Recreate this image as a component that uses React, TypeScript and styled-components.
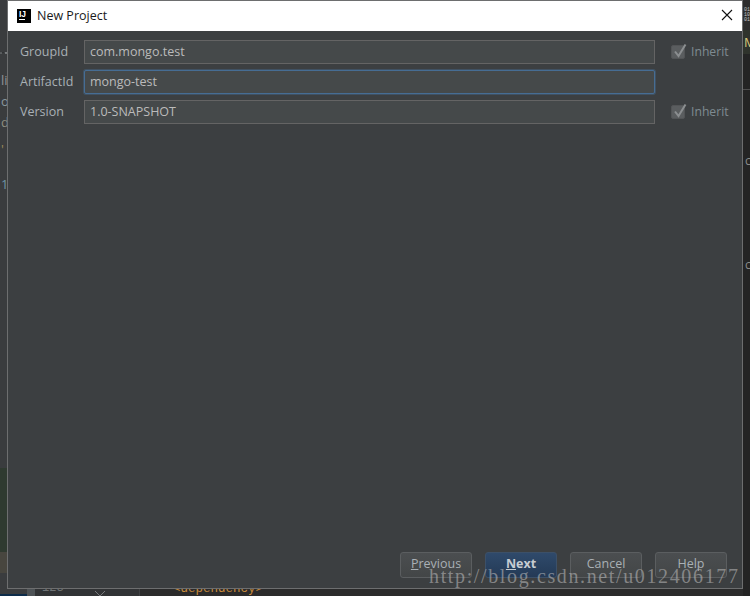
import React from "react";
import styled, { createGlobalStyle } from "styled-components";

const colors = {
  dialog: "#3c3f41",
  frame: "#6d6e6f",
  text: "#bbbbbb",
  label: "#a9b0b5",
  fieldBg: "#45494a",
  fieldBorder: "#646464",
  focus: "#466d94",
  muted: "#7f8b91",
  ide: "#2b2b2b",
};

const GlobalStyle = createGlobalStyle`
  html, body {
    margin: 0;
    padding: 0;
    background: ${colors.ide};
  }
`;

const Stage = styled.div`
  position: relative;
  width: 750px;
  height: 596px;
  overflow: hidden;
  display: flex;
  justify-content: space-between;
  background: ${colors.ide};
  font-family: "Open Sans", "Noto Sans", sans-serif;
`;

/* IDE window visible behind the dialog */
const LeftDock = styled.div`
  width: 27px;
  display: flex;
  flex-direction: column;
  background: #3a3c3e;
  flex-shrink: 0;
`;

const DockHead = styled.div`
  height: 53px;
  padding-top: 39px;
  border-bottom: 1px solid #2f3133;
  box-sizing: border-box;
`;

const TreeLines = styled.div`
  height: 415px;
  padding-top: 17px;
  box-sizing: border-box;
  display: flex;
  flex-direction: column;
  font: 13px/21px "Open Sans", sans-serif;
  color: #8f9396;
`;

const TreeLine = styled.div<{ $tone?: string; $gap?: number }>`
  height: 21px;
  padding-left: 1px;
  margin-top: ${(p) => p.$gap || 0}px;
  color: ${(p) => p.$tone || "#8f9396"};
`;

const GreenBlock = styled.div`
  height: 84px;
  background: #2f3a30;
`;

const TanBlock = styled.div`
  height: 21px;
  background: #48463f;
`;

const DockEnd = styled.div`
  flex: 1;
  display: flex;
  flex-direction: column;
  justify-content: flex-end;
`;

const BlueStrip = styled.div`
  height: 2px;
  background: #0d2c4a;
`;

const Editor = styled.div`
  flex: 1;
  display: flex;
  align-items: flex-end;
  height: 596px;
`;

const Gutter = styled.div`
  width: 113px;
  height: 16px;
  display: flex;
  align-items: center;
  box-sizing: border-box;
  background: #313335;
  border-right: 1px solid #3f4143;
  color: #6f7375;
  font: 12px "Liberation Mono", monospace;
`;

const GutterStripe = styled.div`
  width: 8px;
  align-self: stretch;
  margin-right: 7px;
  background: #4e5356;
`;

const FoldMark = styled.svg`
  margin-left: 30px;
  margin-top: 14px;
`;

const CodeLine = styled.div`
  height: 20px;
  padding-left: 33px;
  color: #c88a3a;
  font: 12.5px/26px "Liberation Mono", monospace;
`;

const RightDock = styled.div`
  width: 7px;
  background: #242424;
  flex-shrink: 0;
  display: flex;
  flex-direction: column;
  overflow: hidden;
`;

const BitsIcon = styled.div`
  height: 30px;
  padding-top: 8px;
  box-sizing: border-box;
  background: #2d2d2d;
  color: #c5c5c5;
  font: 5px/5px "Liberation Mono", monospace;
  padding-left: 1px;
`;

const TabRow = styled.div`
  height: 24px;
  background: #2f332c;
  color: #d8c87a;
  font: 13px/24px "Open Sans", sans-serif;
  padding-left: 1px;
  white-space: nowrap;
`;

const TabRule = styled.div`
  height: 36px;
  border-bottom: 1px solid #505050;
  box-sizing: border-box;
`;

const Marker = styled.div<{ $gap: number }>`
  margin-top: ${(p) => p.$gap}px;
  color: #8a8a8a;
  font: 12px/12px "Open Sans", sans-serif;
  padding-left: 2px;
`;

/* The dialog window */
const Dialog = styled.div`
  position: absolute;
  left: 7px;
  top: 0;
  width: 736px;
  height: 589px;
  box-sizing: border-box;
  border: 1px solid ${colors.frame};
  display: flex;
  flex-direction: column;
  background: ${colors.dialog};
`;

const TitleBar = styled.div`
  height: 30px;
  flex-shrink: 0;
  background: #ffffff;
  display: flex;
  align-items: center;
  padding: 0 9px 0 9px;
  gap: 6px;
`;

const AppLogo = styled.div`
  width: 14px;
  height: 14px;
  margin-bottom: 1px;
  background: #000;
  color: #fff;
  display: flex;
  flex-direction: column;
  align-items: flex-start;
  padding: 1px 2px;
  box-sizing: border-box;
  font: bold 8.5px/8px "Liberation Sans", sans-serif;
`;

const LogoBar = styled.span`
  width: 6px;
  height: 1px;
  margin-top: 1px;
  background: #fff;
`;

const Title = styled.div`
  flex: 1;
  font-size: 12.5px;
  color: #1a1a1a;
  padding-bottom: 2px;
`;

const CloseIcon = styled.svg`
  margin-bottom: 2px;
`;

const Form = styled.div`
  flex: 1;
  display: flex;
  flex-direction: column;
  gap: 6px;
  padding: 9px 14px 0 12px;
`;

const Row = styled.div`
  display: flex;
  align-items: center;
  height: 24px;
`;

const Label = styled.div`
  width: 64px;
  flex-shrink: 0;
  font-size: 12.5px;
  padding-bottom: 2px;
  color: ${colors.label};
`;

const Field = styled.div<{ $focused?: boolean }>`
  width: 571px;
  height: 24px;
  box-sizing: border-box;
  flex-shrink: 0;
  display: flex;
  align-items: center;
  padding: 0 0 2px 5px;
  font-size: 12.5px;
  color: ${colors.text};
  background: ${colors.fieldBg};
  border: 1px solid ${(p) => (p.$focused ? colors.focus : colors.fieldBorder)};
  border-radius: ${(p) => (p.$focused ? "2px" : "0")};
  box-shadow: ${(p) => (p.$focused ? `0 0 0 1px ${colors.focus}66` : "none")};
`;

const InheritBox = styled.div`
  margin-left: 16px;
  display: flex;
  align-items: center;
  gap: 6px;
  font-size: 12.2px;
  color: ${colors.muted};
`;

const InheritText = styled.span`
  padding-bottom: 2px;
`;

const CheckBox = styled.div`
  position: relative;
  width: 14px;
  height: 14px;
  box-sizing: border-box;
  background: #5a5d5f;
  border: 1px solid #525456;
  border-radius: 2px;
`;

const CheckMark = styled.svg`
  position: absolute;
  left: 0;
  top: -4px;
`;

const Footer = styled.div`
  display: flex;
  justify-content: flex-end;
  gap: 13px;
  padding: 0 15px 10px 0;
`;

const Button = styled.div<{ $primary?: boolean }>`
  width: 72px;
  height: 26px;
  box-sizing: border-box;
  display: flex;
  align-items: center;
  justify-content: center;
  padding-bottom: 3px;
  font-size: 12.5px;
  border-radius: 3px;
  font-weight: ${(p) => (p.$primary ? 700 : 400)};
  color: ${(p) => (p.$primary ? "#c6ccd2" : colors.label)};
  border: 1px solid ${(p) => (p.$primary ? "#3c5068" : "#5b5e60")};
  background: ${(p) =>
    p.$primary
      ? "linear-gradient(#2f4a6b, #243a56)"
      : "linear-gradient(#4b4e50, #434647)"};
`;

const Mnemonic = styled.span`
  text-decoration: underline;
`;

const Watermark = styled.div`
  position: absolute;
  left: 429px;
  top: 565px;
  color: rgba(180, 180, 180, 0.6);
  font: 20px/22px "Liberation Serif", serif;
  letter-spacing: 1.63px;
  white-space: nowrap;
`;

const Check = () => (
  <CheckMark width="16" height="17" viewBox="0 0 16 17">
    <path d="M3 9.5 L6.5 14 L13.5 2.5" fill="none" stroke="#8b8e90" strokeWidth="2" />
  </CheckMark>
);

const fields = [
  { label: "GroupId", value: "com.mongo.test", inherit: true },
  { label: "ArtifactId", value: "mongo-test", focused: true },
  { label: "Version", value: "1.0-SNAPSHOT", inherit: true },
];

export default function App() {
  return (
    <Stage>
      <GlobalStyle />
      <LeftDock>
        <DockHead>
          <svg width="7" height="4" viewBox="0 0 7 4">
            <path d="M0 1 H2 M5 0 L7 0 L6 2 Z" stroke="#7d8082" fill="#7d8082" strokeWidth="1" />
          </svg>
        </DockHead>
        <TreeLines>
          <TreeLine>li</TreeLine>
          <TreeLine $tone="#8a98a0">o</TreeLine>
          <TreeLine $tone="#8f8f80">d</TreeLine>
          <TreeLine $tone="#9a8a5a" $gap={6}>'</TreeLine>
          <TreeLine $tone="#6f94a5" $gap={14}>1</TreeLine>
        </TreeLines>
        <GreenBlock />
        <TanBlock />
        <DockEnd>
          <BlueStrip />
        </DockEnd>
      </LeftDock>
      <Editor>
        <Gutter>
          <GutterStripe />
          123
          <FoldMark width="12" height="10" viewBox="0 0 12 10">
            <path d="M1 1 L6 6 L11 1 M6 6 V10" fill="none" stroke="#77797b" />
          </FoldMark>
        </Gutter>
        <CodeLine>&lt;dependency&gt;</CodeLine>
      </Editor>
      <RightDock>
        <BitsIcon>
          01
          <br />
          10
          <br />
          01
        </BitsIcon>
        <TabRow>Ma</TabRow>
        <TabRule />
        <Marker $gap={65}>c</Marker>
        <Marker $gap={92}>c</Marker>
      </RightDock>

      <Dialog>
        <TitleBar>
          <AppLogo>
            IJ
            <LogoBar />
          </AppLogo>
          <Title>New Project</Title>
          <CloseIcon width="12" height="12" viewBox="0 0 12 12">
            <path d="M1 1 L11 11 M11 1 L1 11" stroke="#111" strokeWidth="1.1" fill="none" />
          </CloseIcon>
        </TitleBar>
        <Form>
          {fields.map((f) => (
            <Row key={f.label}>
              <Label>{f.label}</Label>
              <Field $focused={f.focused}>{f.value}</Field>
              {f.inherit && (
                <InheritBox>
                  <CheckBox>
                    <Check />
                  </CheckBox>
                  <InheritText>Inherit</InheritText>
                </InheritBox>
              )}
            </Row>
          ))}
        </Form>
        <Footer>
          <Button>
            <span>
              <Mnemonic>P</Mnemonic>revious
            </span>
          </Button>
          <Button $primary>
            <span>
              <Mnemonic>N</Mnemonic>ext
            </span>
          </Button>
          <Button>Cancel</Button>
          <Button>Help</Button>
        </Footer>
      </Dialog>
      <Watermark>http://blog.csdn.net/u012406177</Watermark>
    </Stage>
  );
}
